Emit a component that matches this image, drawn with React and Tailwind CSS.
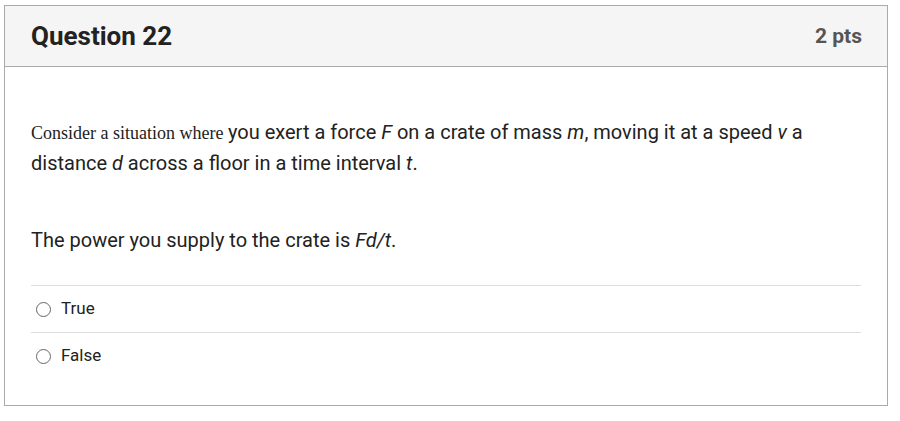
export default function App() {
  return (
    <div className="w-[900px] h-[421px] bg-white pt-[5px] pl-[4px]" style={{ fontFamily: 'Roboto, "Liberation Sans", sans-serif' }}>
      <div className="w-[884px] h-[401px] border border-[#aaaaaa] flex flex-col">
        <div className="h-[61px] bg-[#f5f5f5] border-b border-[#aaaaaa] flex items-center justify-between pl-[26px] pr-[25px] shrink-0">
          <div className="text-[26px] font-bold text-[#222222] leading-none">Question 22</div>
          <div className="text-[21px] font-bold text-[#555555] leading-none">2 pts</div>
        </div>
        <div className="px-[26px] pt-[50px]">
          <p className="text-[20px] leading-[30px] text-[#222222]">
            <span className="text-[18px]" style={{ fontFamily: '"Liberation Serif", serif' }}>Consider a situation where </span>
            you exert a force <i>F</i> on a crate of mass <i>m</i>, moving it at a speed <i>v</i> a distance <i>d</i> across a floor in a time interval <i>t</i>.
          </p>
          <p className="text-[20px] leading-[30px] text-[#222222] mt-[47px]">
            The power you supply to the crate is <i>Fd/t</i>.
          </p>
          <div className="mt-[30px] border-t border-[#dddddd]">
            <div className="h-[47px] flex items-center border-b border-[#dddddd]">
              <span className="w-[15px] h-[15px] rounded-full border border-[#666666] ml-[5px] mr-[10px]"></span>
              <span className="text-[17px] text-[#222222]">True</span>
            </div>
            <div className="h-[46px] flex items-center">
              <span className="w-[15px] h-[15px] rounded-full border border-[#666666] ml-[5px] mr-[10px]"></span>
              <span className="text-[17px] text-[#222222]">False</span>
            </div>
          </div>
        </div>
      </div>
    </div>
  );
}
